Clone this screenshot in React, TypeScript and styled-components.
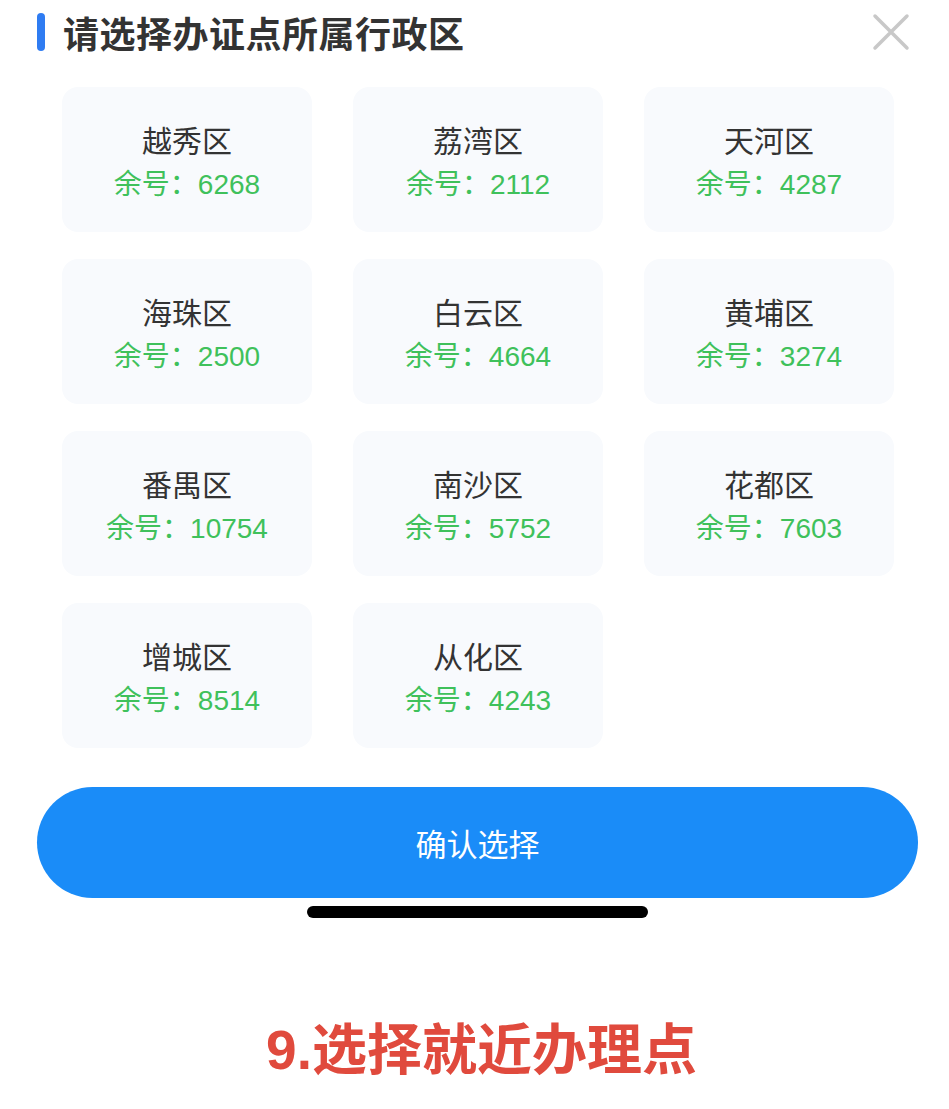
import React, { FC } from 'react';
import styled, { createGlobalStyle } from 'styled-components';

const districts = [
  { name: '越秀区', left: 6268 },
  { name: '荔湾区', left: 2112 },
  { name: '天河区', left: 4287 },
  { name: '海珠区', left: 2500 },
  { name: '白云区', left: 4664 },
  { name: '黄埔区', left: 3274 },
  { name: '番禺区', left: 10754 },
  { name: '南沙区', left: 5752 },
  { name: '花都区', left: 7603 },
  { name: '增城区', left: 8514 },
  { name: '从化区', left: 4243 },
];

const GlobalStyle = createGlobalStyle`
  * { box-sizing: border-box; }
  body {
    margin: 0;
    background: #fff;
    font-family: "Noto Sans CJK SC", "Noto Sans", sans-serif;
  }
`;

const App: FC = () => {
  return (
    <Page>
      <GlobalStyle />
      <Header>
        <Accent />
        <Title>请选择办证点所属行政区</Title>
        <Close aria-label="关闭">
          <svg width="38" height="38" viewBox="0 0 38 38">
            <path d="M3 3 L35 35 M35 3 L3 35" stroke="#c8c8c8" strokeWidth="3.5" strokeLinecap="round" />
          </svg>
        </Close>
      </Header>
      <Grid>
        {districts.map((d) => (
          <Card key={d.name}>
            <Name>{d.name}</Name>
            <Left>余号：{d.left}</Left>
          </Card>
        ))}
      </Grid>
      <Footer>
        <ConfirmButton>确认选择</ConfirmButton>
        <HomeBar />
      </Footer>
      <Caption>9.选择就近办理点</Caption>
    </Page>
  );
};

export default App;

const Page = styled.div`
  width: 949px;
  height: 1109px;
  padding: 10px 0 0;
  display: flex;
  flex-direction: column;
  align-items: center;
`;

const Header = styled.div`
  width: 100%;
  display: flex;
  align-items: center;
  padding: 0 38px 0 37px;
  height: 44px;
`;

const Accent = styled.div`
  width: 8px;
  height: 38px;
  border-radius: 4px;
  background: #2f7cf2;
  margin-right: 18px;
`;

const Title = styled.h1`
  margin: 0;
  flex: 1;
  font-size: 36px;
  font-weight: 700;
  color: #333;
  letter-spacing: 0.5px;
`;

const Close = styled.div`
  width: 40px;
  height: 40px;
  display: flex;
  align-items: center;
  justify-content: center;
`;

const Grid = styled.div`
  width: 100%;
  margin-top: 33px;
  padding: 0 56px 0 62px;
  display: grid;
  grid-template-columns: repeat(3, 250px);
  column-gap: 41px;
  row-gap: 27px;
`;

const Card = styled.div`
  height: 145px;
  border-radius: 16px;
  background: #f8fafd;
  display: flex;
  flex-direction: column;
  align-items: center;
  justify-content: center;
  padding-top: 4px;
`;

const Name = styled.div`
  font-size: 30px;
  color: #333;
  line-height: 42px;
`;

const Left = styled.div`
  font-family: "Liberation Sans", "Noto Sans CJK SC", sans-serif;
  font-size: 28px;
  color: #3fc15b;
  line-height: 40px;
  margin-top: 5px;
`;

const Footer = styled.div`
  width: 100%;
  padding: 0 31px 0 37px;
  margin-top: 39px;
  display: flex;
  flex-direction: column;
  align-items: center;
`;

const ConfirmButton = styled.button`
  width: 100%;
  height: 111px;
  border: none;
  border-radius: 56px;
  background: #1a8cf8;
  color: #fff;
  font-family: inherit;
  font-size: 31px;
  display: flex;
  align-items: center;
  justify-content: center;
`;

const HomeBar = styled.div`
  margin-top: 8px;
  width: 341px;
  height: 12px;
  border-radius: 6px;
  background: #000;
`;

const Caption = styled.div`
  margin-top: 96px;
  padding-left: 14px;
  font-family: "Liberation Sans", "Noto Sans CJK SC", sans-serif;
  font-size: 55px;
  font-weight: 700;
  color: #e04a3d;
  line-height: 72px;
`;
